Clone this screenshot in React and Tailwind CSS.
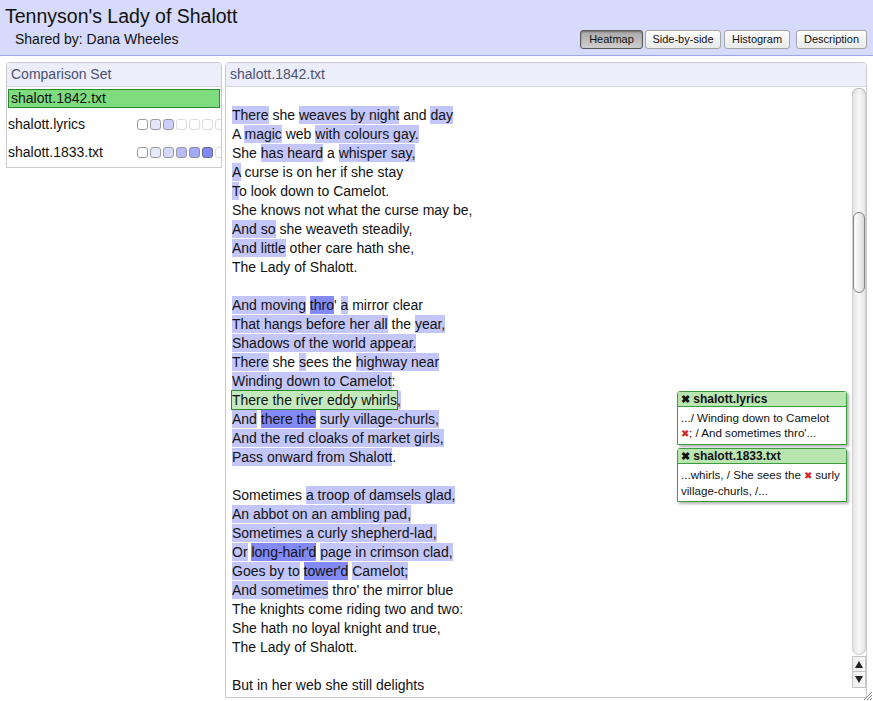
import React from "react";

// highlight kinds
const N = 0; // plain
const L = 1; // light heat
const S = 2; // strong heat
const G = 3; // selected passage

const stanzas = [
  [
    [["There", L], [" she "], ["weaves by night", L], [" and "], ["day", L]],
    [["A "], ["magic", L], [" web "], ["with colours gay.", L]],
    [["She "], ["has heard", L], [" a "], ["whisper say,", L]],
    [["A", L], [" curse is on her if she stay"]],
    [["T", L], ["o look down to Camelot."]],
    [["She knows not what the curse may be,"]],
    [["And so", L], [" she weaveth steadily,"]],
    [["And little", L], [" other care hath she,"]],
    [["The Lady of Shalott."]],
  ],
  [
    [["And moving", L], [" "], ["thro", S], ["' "], ["a", L], [" mirror clear"]],
    [["That hangs before her all", L], [" the "], ["year,", L]],
    [["Shadows of the world appear.", L]],
    [["There", L], [" she "], ["s", L], ["ees the "], ["highway near", L]],
    [["Winding down to Camelot", L], [":"]],
    [["There the river eddy whirls", G], [",", L]],
    [["And", L], [" "], ["there the", S], [" "], ["surly village-churls,", L]],
    [["And the red cloaks of market girls,", L]],
    [["Pass onward from Shalott", L], ["."]],
  ],
  [
    [["Sometimes "], ["a troop of damsels glad,", L]],
    [["An abbot on an ambling pad,", L]],
    [["Sometimes a curly shepherd-lad,", L]],
    [["Or", L], [" "], ["long-hair'd", S], [" "], ["page in crimson clad,", L]],
    [["Goes by to", L], [" "], ["tower'd", S], [" "], ["Camelot;", L]],
    [["And sometimes", L], [" thro' the mirror blue"]],
    [["The knights come riding two and two:"]],
    [["She hath no loyal knight and true,"]],
    [["The Lady of Shalott."]],
  ],
  [[["But in her web she still delights"]]],
];

const segClass = {
  [N]: "",
  [L]: "bg-[#c3c6fb] py-px",
  [S]: "bg-[#838af6] py-px",
  [G]: "bg-[#c4e9bf] py-px outline outline-[#2b8a2b]",
};

// heat dots for each witness (bg, border)
const witnesses = [
  {
    name: "shalott.lyrics",
    dots: [
      ["#ffffff", "#9a9a9a"],
      ["#e4e6fb", "#9a9a9a"],
      ["#cacef9", "#9a9a9a"],
      ["#ffffff", "#dcdcdc"],
      ["#ffffff", "#dcdcdc"],
      ["#ffffff", "#dcdcdc"],
      ["#ffffff", "#dcdcdc"],
    ],
  },
  {
    name: "shalott.1833.txt",
    dots: [
      ["#ffffff", "#9a9a9a"],
      ["#e6e8fb", "#9a9a9a"],
      ["#d6d9fa", "#9a9a9a"],
      ["#b6bbf8", "#9a9a9a"],
      ["#a4aaf6", "#8a8a9a"],
      ["#8088f3", "#6a6a8a"],
      ["#ffffff", "#dcdcdc"],
    ],
  },
];

function Button({ children, active, className }) {
  return (
    <div
      className={
        "h-[19px] flex items-center justify-center rounded-[3px] border text-[11px] text-[#111] " +
        (active
          ? "border-[#5a5a5a] bg-gradient-to-b from-[#a9a9a9] to-[#cfcfcf] shadow-[inset_0_1px_2px_rgba(0,0,0,0.35)] "
          : "border-[#a5a5a5] bg-gradient-to-b from-[#ffffff] to-[#e9e9e9] ") +
        className
      }
    >
      {children}
    </div>
  );
}

function Popup({ top, title, children }) {
  return (
    <div
      className={
        "absolute left-[677px] w-[170px] rounded-t-[3px] border border-[#3f9b3f] bg-white shadow-[2px_2px_3px_rgba(0,0,0,0.3)] " +
        top
      }
    >
      <div className="h-[15px] bg-[#b9e5b1] border-b border-[#3f9b3f] px-[3px] text-[12px] leading-[14px] font-bold text-[#111] whitespace-nowrap">
        <span className="text-[11px]">✖</span> {title}
      </div>
      <div className="px-[3px] pt-[3px] pb-[3px] text-[11.6px] leading-[15px] text-[#111] whitespace-nowrap">
        {children}
      </div>
    </div>
  );
}

const X = () => <span className="text-[#d42424] text-[10px]">✖</span>;

function Scrollbar() {
  return (
    <div className="w-[14px] shrink-0 flex flex-col bg-white">
      <div className="h-[6px] mt-[1px] rounded-t-full border border-b-0 border-[#bdbdbd] bg-gradient-to-r from-[#dcdcdc] via-[#f4f4f4] to-[#dedede]" />
      <div className="flex-1 rounded-b-full border border-t-0 border-[#cfcfcf] bg-gradient-to-r from-[#e4e4e4] via-[#f8f8f8] to-[#e6e6e6]">
        <div className="mt-[118px] h-[81px] rounded-full border border-[#858585] bg-gradient-to-r from-[#fbfbfb] via-[#efefef] to-[#d8d8d8]" />
      </div>
      <div className="mt-[1px] h-[16px] border border-[#c4c4c4] bg-gradient-to-r from-[#eeeeee] to-[#fafafa] flex items-center justify-center">
        <svg width="8" height="7" viewBox="0 0 8 7">
          <path d="M4 0 L8 7 L0 7 Z" fill="#222" />
        </svg>
      </div>
      <div className="h-[16px] border border-t-0 border-[#c4c4c4] bg-gradient-to-r from-[#eeeeee] to-[#fafafa] flex items-center justify-center">
        <svg width="8" height="7" viewBox="0 0 8 7">
          <path d="M0 0 L8 0 L4 7 Z" fill="#222" />
        </svg>
      </div>
      <div className="h-[9px]" />
    </div>
  );
}

export default function App() {
  return (
    <div className="relative w-[873px] h-[701px] overflow-hidden bg-white text-[#111] font-['Liberation_Sans',Arial,Helvetica,sans-serif]">
      {/* Header */}
      <div className="h-[56px] bg-[#d6dafb] border-b border-[#9ea5e8] flex justify-between">
        <div className="pl-[5px] pt-[5px]">
          <div className="text-[19.5px] leading-[22px]">Tennyson's Lady of Shalott</div>
          <div className="mt-[4px] pl-[10px] text-[14px] leading-[17px]">Shared by: Dana Wheeles</div>
        </div>
        <div className="flex items-end pb-[6px] pr-[6px]">
          <Button active className="w-[63px]">Heatmap</Button>
          <Button className="ml-[2px] w-[76px]">Side-by-side</Button>
          <Button className="ml-[3px] w-[66px]">Histogram</Button>
          <Button className="ml-[6px] w-[71px]">Description</Button>
        </div>
      </div>

      {/* Body */}
      <div className="flex items-start pt-[6px] pl-[6px]">
        {/* Comparison set */}
        <div className="w-[216px] h-[106px] overflow-hidden rounded-t-[4px] border border-[#c9c9cf]">
          <div className="h-[24px] bg-[#eceefb] border-b border-[#d4d6e2] pl-[4px] flex items-center text-[14px] text-[#4b5070]">
            Comparison Set
          </div>
          <div className="pt-[2px] px-[1px]">
            <div className="mb-[2px] h-[19px] border border-[#2a8a2a] bg-[#7edb7e] pl-[2px] flex items-center text-[14px] text-[#111]">
              shalott.1842.txt
            </div>
            {witnesses.map((w) => (
              <div key={w.name} className="h-[28px] flex items-center text-[14px] text-[#111]">
                <div className="w-[129px] shrink-0">{w.name}</div>
                <div className="flex gap-[2px] shrink-0">
                  {w.dots.map(([bg, bd], i) => (
                    <div
                      key={i}
                      className="w-[11px] h-[11px] rounded-[3px] border"
                      style={{ backgroundColor: bg, borderColor: bd }}
                    />
                  ))}
                </div>
              </div>
            ))}
          </div>
        </div>

        {/* Text panel */}
        <div className="ml-[3px] w-[642px] h-[636px] overflow-hidden rounded-t-[4px] border border-[#c9c9cf] flex flex-col">
          <div className="h-[24px] shrink-0 bg-[#eceefb] border-b border-[#d4d6e2] pl-[4px] flex items-center text-[14px] text-[#4b5070]">
            shalott.1842.txt
          </div>
          <div className="flex-1 flex min-h-0">
            <div className="flex-1 overflow-hidden pt-[19px] pl-[6px] text-[14px] leading-[19px] text-[#111]">
              {stanzas.map((st, si) => (
                <div key={si} className={si > 0 ? "mt-[19px]" : ""}>
                  {st.map((line, li) => (
                    <div key={li} className="whitespace-pre">
                      {line.map(([t, k = N], ki) => (
                        <span key={ki} className={segClass[k]}>
                          {t}
                        </span>
                      ))}
                    </div>
                  ))}
                </div>
              ))}
            </div>
            <Scrollbar />
          </div>
        </div>
      </div>

      {/* Variant notes */}
      <Popup top="top-[391px]" title="shalott.lyrics">
        .../ Winding down to Camelot
        <br />
        <X />; / And sometimes thro'...
      </Popup>
      <Popup top="top-[448px]" title="shalott.1833.txt">
        ...whirls, / She sees the <X /> surly
        <br />
        village-churls, /...
      </Popup>

      {/* window resize grip */}
      <svg className="absolute right-0 bottom-0" width="12" height="12" viewBox="0 0 12 12">
        <path d="M11 3 L3 11 M11 6 L6 11 M11 9 L9 11" stroke="#8a8a8a" strokeWidth="1" />
      </svg>
    </div>
  );
}
